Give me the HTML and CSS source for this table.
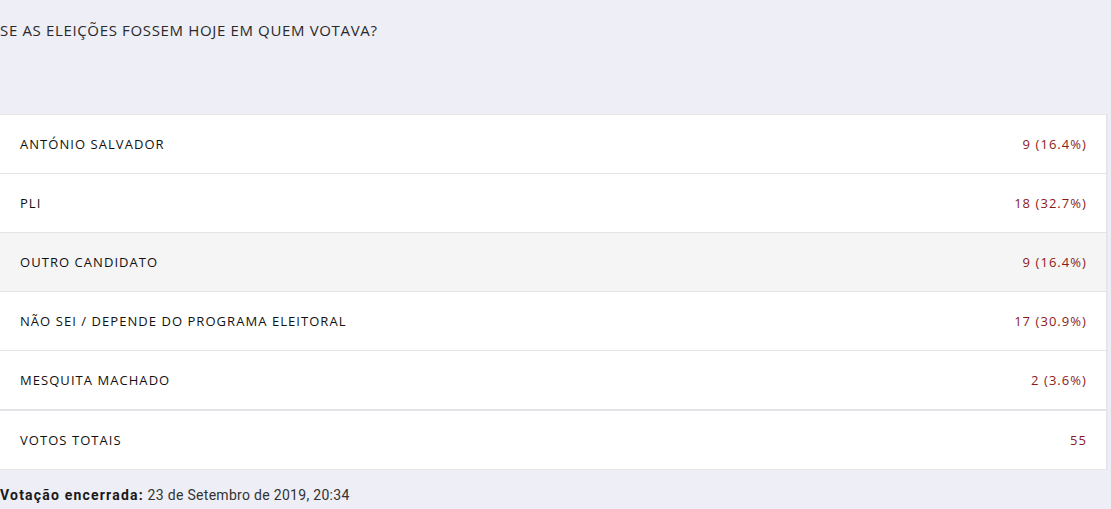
FILE: index.html
```html
<!DOCTYPE html>
<html lang="pt">
<head>
<meta charset="utf-8">
<title>Sondagem</title>
<link rel="stylesheet" href="styles.css">
</head>
<body>
<div class="poll">
  <h3 class="question">SE AS ELEIÇÕES FOSSEM HOJE EM QUEM VOTAVA?</h3>
  <ul class="results">
    <li class="row"><span class="label">ANTÓNIO SALVADOR</span><span class="value">9 (16.4%)</span></li>
    <li class="row"><span class="label">PLI</span><span class="value">18 (32.7%)</span></li>
    <li class="row hover"><span class="label">OUTRO CANDIDATO</span><span class="value">9 (16.4%)</span></li>
    <li class="row"><span class="label">NÃO SEI / DEPENDE DO PROGRAMA ELEITORAL</span><span class="value">17 (30.9%)</span></li>
    <li class="row"><span class="label">MESQUITA MACHADO</span><span class="value">2 (3.6%)</span></li>
    <li class="row total"><span class="label">VOTOS TOTAIS</span><span class="value">55</span></li>
  </ul>
  <p class="closed"><strong>Votação encerrada:</strong> 23 de Setembro de 2019, 20:34</p>
</div>
</body>
</html>
```
FILE: styles.css
```css
html, body {
  margin: 0;
  padding: 0;
  background: #eeeef6;
}
body {
  font-family: "Open Sans", "DejaVu Sans", sans-serif;
  color: #222;
}
.poll {
  width: 1108px;
}
.question {
  margin: 0;
  padding: 20px 0 0 0;
  height: 114px;
  box-sizing: border-box;
  font-size: 15px;
  font-weight: 400;
  letter-spacing: 0.65px;
  color: #2a2a2a;
  line-height: 21px;
}
.results {
  list-style: none;
  margin: 0;
  padding: 0;
  background: #fff;
  border-top: 1px solid #e4e4e8;
  border-right: 2px solid #e6e6ec;
}
.row {
  display: flex;
  justify-content: space-between;
  align-items: center;
  height: 58px;
  padding: 0 19px 0 20px;
  border-bottom: 1px solid #e4e4e8;
  font-size: 13px;
  letter-spacing: 1.05px;
  color: #111;
}
.row.hover {
  background: #f5f5f5;
}
.row.total {
  border-top: 1px solid #e4e4e8;
}
.value {
  color: #8b1a1a;
}
.closed {
  margin: 0;
  padding: 17px 0 0 0;
  font-family: Roboto, "Liberation Sans", sans-serif;
  font-size: 14px;
  letter-spacing: 0.3px;
  color: #333;
}
.closed strong {
  color: #1a1a1a;
  font-weight: 700;
  letter-spacing: 1.2px;
}
```
